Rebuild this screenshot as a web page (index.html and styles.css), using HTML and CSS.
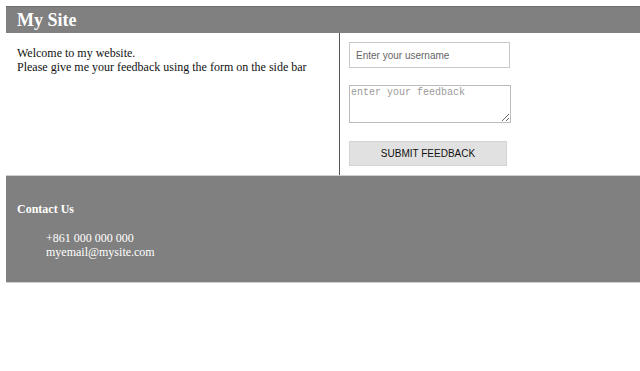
FILE: index.html
```html
<!DOCTYPE html>
<html>
<head>
<meta charset="utf-8">
<link rel="stylesheet" href="styles.css">
</head>
<body>
<header class="site-header"><h1 class="site-title">My Site</h1></header>
<div class="main">
  <section class="content">
    <p class="intro">Welcome to my website.<br>Please give me your feedback using the form on the side bar</p>
  </section>
  <aside class="sidebar">
    <form class="feedback-form">
      <input class="field-user" type="text" placeholder="Enter your username">
      <textarea class="field-feedback" placeholder="enter your feedback"></textarea>
      <button class="submit-btn" type="button">SUBMIT FEEDBACK</button>
    </form>
  </aside>
</div>
<footer class="site-footer">
  <h4 class="contact-title">Contact Us</h4>
  <ul class="contact-list">
    <li>+861 000 000 000</li>
    <li>myemail@mysite.com</li>
  </ul>
</footer>
</body>
</html>
```
FILE: styles.css
```css
html, body { background: #fff; }
body {
  margin: 6px 0 0 6px;
  font-family: "Liberation Serif", "Times New Roman", serif;
  color: #111;
}
.site-header {
  background: #808080;
  height: 27px;
  padding-left: 11px;
  border-top: 1px solid #6e6e6e;
  box-sizing: border-box;
}
.site-title {
  margin: 0;
  font-size: 18px;
  line-height: 27px;
  font-weight: bold;
  color: #fff;
}
.main {
  display: flex;
  height: 142px;
}
.content {
  width: 334px;
  box-sizing: border-box;
  border-right: 1px solid #555;
  padding: 13px 11px 0 11px;
}
.intro {
  margin: 0;
  font-size: 12px;
  line-height: 14px;
}
.sidebar {
  flex: 1;
  padding: 9px 0 0 9px;
}
.feedback-form {
  display: flex;
  flex-direction: column;
  align-items: flex-start;
}
.field-user {
  width: 161px;
  height: 26px;
  box-sizing: border-box;
  border: 1px solid #c8c8c8;
  padding: 0 6px;
  font-family: "Liberation Sans", Arial, sans-serif;
  font-size: 10px;
  margin: 0 0 17px 0;
}
.field-user::placeholder { color: #666; }
.field-feedback {
  width: 162px;
  height: 38px;
  box-sizing: border-box;
  border: 1px solid #bbb;
  padding: 1px 1px;
  font-family: "Liberation Mono", monospace;
  font-size: 10px;
  resize: vertical;
  margin: 0 0 18px 0;
}
.field-feedback::placeholder { color: #9a9a9a; }
.submit-btn {
  width: 158px;
  height: 25px;
  background: #e1e1e1;
  border: 1px solid #d4d4d4;
  font-family: "Liberation Sans", Arial, sans-serif;
  font-size: 10px;
  color: #111;
  padding: 0;
}
.site-footer {
  background: #808080;
  border-top: 1px solid #cfcfcf;
  border-bottom: 1px solid #cfcfcf;
  height: 108px;
  box-sizing: border-box;
  padding: 26px 11px 0 11px;
  color: #fff;
}
.contact-title {
  margin: 0;
  font-size: 12px;
  line-height: 15px;
  font-weight: bold;
}
.contact-list {
  list-style: none;
  margin: 14px 0 0 0;
  padding-left: 29px;
  font-size: 12px;
  line-height: 14px;
}
```
